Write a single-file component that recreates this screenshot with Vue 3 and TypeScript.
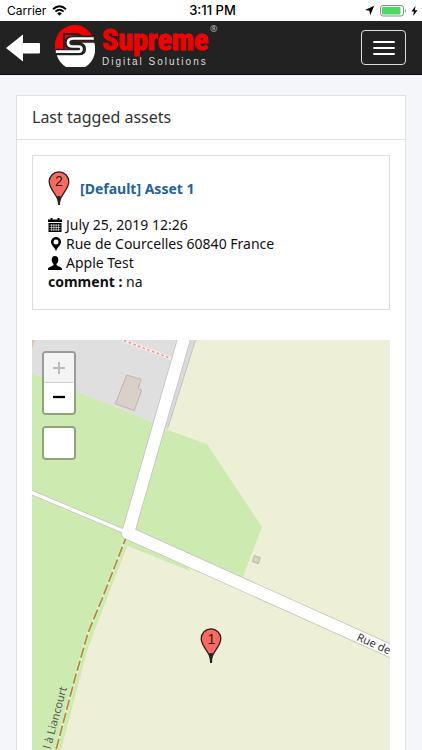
<script setup lang="ts">
interface Asset {
  name: string
  marker: number
  date: string
  address: string
  user: string
  comment: string
}

const asset: Asset = {
  name: '[Default] Asset 1',
  marker: 2,
  date: 'July 25, 2019 12:26',
  address: 'Rue de Courcelles 60840 France',
  user: 'Apple Test',
  comment: 'na',
}
</script>

<template>
  <div class="page">
    <div class="status">
      <div class="status-left">
        <span>Carrier</span>
        <svg width="15" height="11" viewBox="0 0 15 11" aria-hidden="true">
          <path d="M1 4.2Q7.5-1.8 14 4.2" fill="none" stroke="#000" stroke-width="1.9" />
          <path d="M3.4 6.6Q7.5 2.8 11.6 6.6" fill="none" stroke="#000" stroke-width="1.8" />
          <path d="M5.2 8.4Q7.5 6.3 9.8 8.4L7.5 10.8Z" />
        </svg>
      </div>
      <strong class="clock">3:11 PM</strong>
      <div class="status-right">
        <svg width="11" height="11" viewBox="0 0 11 11" aria-hidden="true">
          <path d="M10.2.8 6.2 10.2 5.4 5.8 1 5Z" />
        </svg>
        <svg width="26" height="12" viewBox="0 0 26 12" aria-hidden="true">
          <rect x=".5" y=".5" width="23" height="10.5" rx="2.5" fill="#fff" stroke="#8c8c8c" />
          <rect x="2" y="2" width="18.5" height="7.5" rx="1" fill="#4cd964" />
          <path d="M25 4v3.6q1-.6 1-1.8T25 4Z" fill="#8c8c8c" />
        </svg>
        <svg width="7" height="10" viewBox="0 0 7 10" aria-hidden="true">
          <path d="M4.6 0 .3 5.6H3L2 10l4.6-5.8H3.8Z" />
        </svg>
      </div>
    </div>

    <header class="navbar">
      <a class="back" href="#" aria-label="Back">
        <svg width="34" height="28" viewBox="0 0 34 28" aria-hidden="true">
          <path d="M0 14 17 .5V9H33q1 0 1 1v8.500q0 1-1 1H17v8Z" fill="#fff" />
        </svg>
      </a>
      <a class="brand" href="#">
        <svg width="40" height="42" viewBox="0 0 40 42" aria-hidden="true">
          <path d="M.3 25A19.600 20.500 0 0 1 39 16.300H19Q14 16.300 14 20.500 14 24.500 17 25Z" fill="#f40000" />
          <path d="M9 24V9H19Q26 9 28 13" fill="none" stroke="#222" stroke-width="1.800" />
          <path d="M39 13.500H18.500Q12.500 13.500 12.500 17.500T17 21.500H24Q27 21.500 27 24T24 26.700H.8" fill="none" stroke="#222" stroke-width="6" />
          <path d="M1.800 30.300H24Q31 30.300 31 24 31 19 26.500 17.700H39.300A19.600 20.500 0 0 1 1.800 30.300Z" fill="#fff" />
          <path d="M38.800 13.500H18.500Q13 13.500 13 17.500T17.500 21.500H23.500Q26.500 21.500 26.500 24T23.500 26.700H.8" fill="none" stroke="#fff" stroke-width="2.700" />
        </svg>
        <span class="wordmark">
          <span class="brand-name">Supreme</span>
          <span class="tagline">Digital Solutions</span>
        </span>
        <span class="registered">®</span>
      </a>
      <button class="toggle" type="button" aria-label="Toggle navigation">
        <span></span><span></span><span></span>
      </button>
    </header>

    <main class="content">
      <section class="panel">
        <h1>Last tagged assets</h1>
        <div class="panel-body">
          <article class="card">
            <div class="card-title">
              <svg width="22" height="34" viewBox="0 0 22 34" aria-hidden="true">
                <path d="M11 33.500C11 25 1.200 19 1.200 10.600a9.800 9.800 0 0 1 19.600 0C20.800 19 11 25 11 33.500Z" fill="#fb6a60" stroke="#2a2020" stroke-width="1.300" />
                <path d="M9.300 25 10 34h2l.7-9Z" fill="#2a2020" />
                <text class="pin-number" x="11" y="15" text-anchor="middle">{{ asset.marker }}</text>
              </svg>
              <a href="#">{{ asset.name }}</a>
            </div>
            <ul class="details">
              <li>
                <svg width="14" height="14" viewBox="0 0 14 14" aria-hidden="true">
                  <path d="M0 1.500H2.500V0h2v1.500h5V0h2v1.500H14V4H0ZM.5 5h13v9H.5Z" />
                  <path d="M1.500 7.200h11M1.500 9.500h11M1.500 11.800h11M3.600 6v7M5.900 6v7M8.200 6v7M10.500 6v7" stroke="#fff" stroke-width=".6" />
                </svg>
                <span>{{ asset.date }}</span>
              </li>
              <li>
                <svg width="14" height="14" viewBox="0 0 14 14" aria-hidden="true">
                  <path fill-rule="evenodd" d="M8 0a5 5 0 0 0-5 5c0 3 3 4.500 5 9 2-4.500 5-6 5-9a5 5 0 0 0-5-5Zm0 2.500a2.500 2.500 0 1 1 0 5 2.500 2.500 0 0 1 0-5Z" />
                </svg>
                <span>{{ asset.address }}</span>
              </li>
              <li>
                <svg width="14" height="14" viewBox="0 0 14 14" aria-hidden="true">
                  <path d="M7 0C4.700 0 3.700 1.600 3.700 3.700c0 2 .8 3.400 1.800 4.300v1.300C3.800 10.300 0 11.200 0 13v1h14v-1c0-1.800-3.800-2.700-5.500-3.700V8c1-.9 1.800-2.300 1.800-4.300C10.300 1.600 9.300 0 7 0Z" />
                </svg>
                <span>{{ asset.user }}</span>
              </li>
              <li><span><strong>comment :</strong> {{ asset.comment }}</span></li>
            </ul>
          </article>

          <div class="map">
            <svg class="tiles" viewBox="32 340 358 410" preserveAspectRatio="xMinYMin slice" role="img" aria-label="Map">
              <rect x="32" y="340" width="358" height="410" fill="#edf0d6" />
              <path d="M32 373 152 422 165 429 207 444 262 527 243 577 200 571 128 544 104 606 88 648 61 750H32Z" fill="#cdebb0" />
              <path d="M128 546 190 571 186 562 128 536Z" fill="#cdebb0" />
              <path d="M32 340H196L169 426 165 429 152 422 32 373Z" fill="#e0dfdf" />
              <path d="M32 340h3l-3 9Z" fill="#d9c5b5" />
              <path d="M191 340h4L167 428h-4Z" fill="#dbdadb" />
              <path d="M195.500 340 167.500 429" stroke="#c5c3c3" fill="none" />
              <path d="M126.700 375 141 379.300 138.300 388.700 141.700 390 134.300 410.700 115.300 403.700Z" fill="#d9d0c9" stroke="#c2b3a8" />
              <path d="M254.300 555.500 260.300 557.700 258.300 563.600 252.500 561.600Z" fill="#d9d0c9" stroke="#c2b3a8" />
              <path d="M123 340 171 358.500" stroke="#f5efef" stroke-width="3" />
              <path d="M124 340.500 170 358.200" stroke="#f58f88" stroke-width="1.500" stroke-dasharray="2.500 2.500" />
              <g fill="none" stroke-linejoin="round">
                <path d="M30 491.700 128 533" stroke="#c6c4bd" stroke-width="5" />
                <path d="M184 339 128 533 392 651.500" stroke="#c6c4bd" stroke-width="13.500" />
                <path d="M30 491.700 128 533" stroke="#fff" stroke-width="3.400" />
                <path d="M184 339 128 533 392 651.500" stroke="#fff" stroke-width="11.800" />
                <path d="M125.500 539 101.600 600 88 633 75 678 56 750" stroke="#e3f0cc" stroke-width="3" />
                <path d="M125.500 539 101.600 600 88 633 75 678 56 750" stroke="#b08a3c" stroke-width="1.700" stroke-dasharray="10.500 3" stroke-dashoffset="5" />
              </g>
              <text class="street" transform="translate(356 640) rotate(24)">Rue de</text>
              <text class="street track" transform="translate(67 688) rotate(-75)" text-anchor="end">l à Liancourt</text>
              <g transform="translate(200 628)">
                <path d="M11 33.500C11 25 1.200 19 1.200 10.600a9.800 9.800 0 0 1 19.600 0C20.800 19 11 25 11 33.500Z" fill="#fb6a60" stroke="#2a2020" stroke-width="1.300" />
                <path d="M9.300 25 10 35h2l.7-10Z" fill="#2a2020" />
                <text class="pin-number" x="11.500" y="15.500" text-anchor="middle">1</text>
              </g>
            </svg>
            <div class="controls">
              <div class="control">
                <button class="zoom-in" type="button" aria-label="Zoom in" disabled>
                  <svg width="12" height="12" viewBox="0 0 12 12"><path d="M0 6h12M6 0v12" stroke="#bbb" stroke-width="2" /></svg>
                </button>
                <button type="button" aria-label="Zoom out">
                  <svg width="12" height="12" viewBox="0 0 12 12"><path d="M0 5h12" stroke="#000" stroke-width="2.300" /></svg>
                </button>
              </div>
              <div class="control">
                <button type="button" aria-label="Layers"></button>
              </div>
            </div>
          </div>
        </div>
      </section>
    </main>
  </div>
</template>

<style>
body {
  background: #f5f6f9;
}
</style>

<style scoped>
* {
  box-sizing: border-box;
}

.page {
  display: flex;
  flex-direction: column;
  min-height: 100vh;
  font-family: "Noto Sans", "Open Sans", sans-serif;
  font-size: 14px;
  line-height: 19px;
  color: #111;
}

svg {
  display: block;
  flex: none;
}

a {
  text-decoration: none;
}

.status {
  display: grid;
  grid-template-columns: 1fr auto 1fr;
  align-items: center;
  height: 21px;
  padding: 0 4px 0 7px;
  background: #fff;
  color: #000;
  font-family: Inter, Roboto, sans-serif;
  font-size: 12px;
}

.status-left,
.status-right {
  display: flex;
  align-items: center;
  gap: 6px;
}

.status-right {
  justify-content: flex-end;
  gap: 5px;
}

.clock {
  font-size: 13px;
  font-weight: 500;
}

.navbar {
  display: flex;
  align-items: center;
  height: 54px;
  padding: 0 16px 0 6px;
  background: #222;
  border-bottom: 1px solid #080808;
}

.brand {
  position: relative;
  display: flex;
  align-items: center;
  gap: 7px;
  margin: 0 0 4px 15px;
}

.wordmark {
  display: flex;
  flex-direction: column;
}

.brand-name {
  color: #f40000;
  font-family: "Roboto Condensed", "Liberation Sans Narrow", "DejaVu Sans Condensed", sans-serif;
  font-size: 30px;
  font-weight: 700;
  line-height: 32px;
  -webkit-text-stroke: 1px #f40000;
}

.tagline {
  color: #ddd;
  font-family: "Liberation Sans", sans-serif;
  font-size: 10px;
  letter-spacing: 2px;
  line-height: 12px;
}

.registered {
  position: absolute;
  top: -1px;
  right: -9px;
  color: #bbb;
  font-size: 9px;
  line-height: 12px;
}

.toggle {
  display: flex;
  flex-direction: column;
  align-items: center;
  justify-content: center;
  gap: 4px;
  width: 45px;
  height: 35px;
  margin-left: auto;
  padding: 0;
  background: transparent;
  border: 1px solid #ddd;
  border-radius: 4px;
}

.toggle span {
  width: 22px;
  height: 2px;
  border-radius: 1px;
  background: #fff;
}

.content {
  display: flex;
  flex: 1;
  padding: 20px 16px 0;
}

.panel {
  display: flex;
  flex: 1;
  flex-direction: column;
  background: #fff;
  border: 1px solid #dfe1e5;
  border-bottom: 0;
}

h1 {
  margin: 0;
  padding: 11px 15px;
  border-bottom: 1px solid #dfe1e5;
  color: #333;
  font-size: 16px;
  font-weight: 400;
  line-height: 21px;
}

.panel-body {
  display: flex;
  flex: 1;
  flex-direction: column;
  gap: 30px;
  padding: 15px 15px 0;
}

.card {
  padding: 15px 15px 18px;
  border: 1px solid #ddd;
}

.card-title {
  display: flex;
  align-items: center;
  gap: 10px;
  margin-bottom: 10px;
}

.card-title a {
  color: #23629a;
  font-weight: 700;
}

.pin-number {
  fill: #2a1a1a;
  font-family: "Liberation Sans", sans-serif;
  font-size: 14px;
}

.details {
  margin: 0;
  padding: 0;
  list-style: none;
}

.details li {
  display: flex;
  align-items: center;
  gap: 4px;
}

.map {
  position: relative;
  flex: 1;
  min-height: 300px;
  overflow: hidden;
}

.tiles {
  position: absolute;
  inset: 0;
  width: 100%;
  height: 100%;
}

.street {
  fill: #333;
  font-family: "Noto Sans", sans-serif;
  font-size: 11px;
}

.track {
  fill: #555;
}

.controls {
  position: absolute;
  top: 11px;
  left: 10px;
  display: flex;
  flex-direction: column;
  gap: 11px;
}

.control {
  border: 2px solid rgba(0, 0, 0, 0.3);
  border-radius: 4px;
  background: #fff;
  background-clip: padding-box;
}

.control button {
  display: flex;
  align-items: center;
  justify-content: center;
  width: 30px;
  height: 30px;
  padding: 0;
  border: 0;
  border-radius: 2px;
  background: #fff;
}

.control .zoom-in {
  border-bottom: 1px solid #ccc;
  background: #f4f4f4;
}
</style>
